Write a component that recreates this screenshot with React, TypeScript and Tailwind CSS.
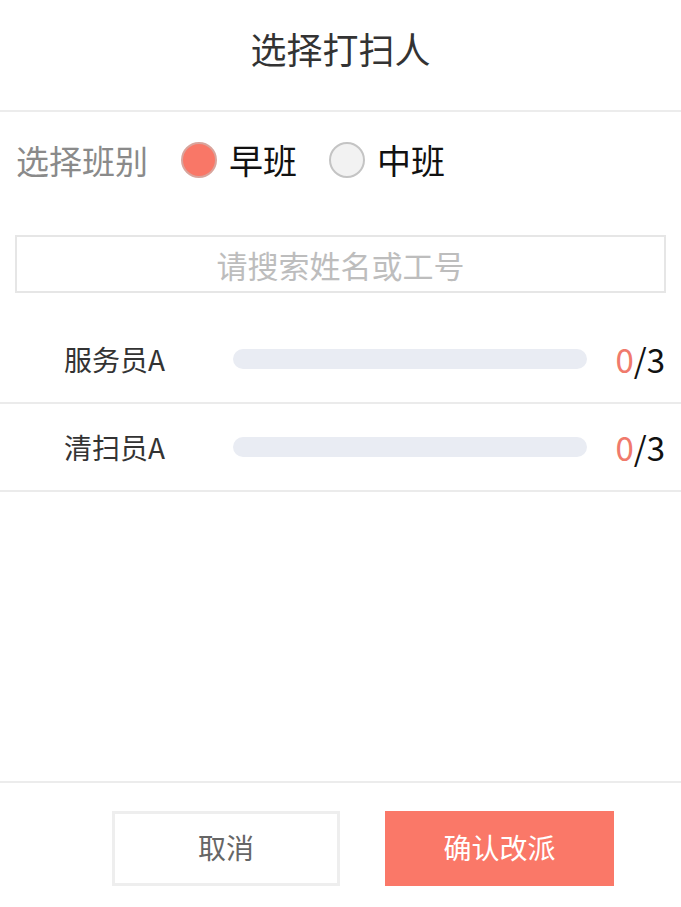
import React from 'react'

const FONT = { fontFamily: '"Noto Sans CJK SC", "Noto Sans", sans-serif' }

type Worker = {
  name: string
  done: number
  total: number
}

const workers: Worker[] = [
  { name: '服务员A', done: 0, total: 3 },
  { name: '清扫员A', done: 0, total: 3 },
]

const Radio = ({ checked, label }: { checked: boolean; label: string }) => (
  <div className="flex items-center gap-[12px]">
    {checked ? (
      <span className="block size-[36px] rounded-full border-2 border-[#d9a49c] bg-[#f97767]" />
    ) : (
      <span className="block size-[36px] rounded-full border-2 border-[#c4c4c4] bg-[#f2f2f2]" />
    )}
    <span className="text-[34px] leading-none text-[#111]">{label}</span>
  </div>
)

export default function App() {
  return (
    <div className="flex h-[907px] w-[681px] flex-col bg-white" style={FONT}>
      <div className="flex h-[112px] shrink-0 items-center justify-center border-b-2 border-[#ececec] pb-[14px]">
        <h1 className="text-[36px] font-normal leading-none text-[#333]">选择打扫人</h1>
      </div>

      <div className="flex h-[96px] shrink-0 items-center pl-[16px]">
        <span className="mr-[33px] text-[33px] leading-none text-[#8a8a8a]">选择班别</span>
        <Radio checked label="早班" />
        <div className="w-[32px]" />
        <Radio checked={false} label="中班" />
      </div>

      <div className="mx-[15px] mt-[27px] flex h-[58px] shrink-0 items-center justify-center border-2 border-[#e6e6e6]">
        <span className="text-[31px] leading-none text-[#bdbdbd]">请搜索姓名或工号</span>
      </div>

      <div className="mt-[23px]">
        {workers.map((w) => (
          <div
            key={w.name}
            className="flex h-[88px] items-center border-b-2 border-[#ebebeb] pl-[64px] pr-[16px]"
          >
            <span className="w-[169px] text-[28px] leading-none text-[#333]">{w.name}</span>
            <div className="h-[20px] w-[354px] rounded-full bg-[#e9ecf3]" />
            <span className="flex-1 text-right text-[33px] leading-none text-[#111]">
              <span className="text-[#f07a6c]">{w.done}</span>/{w.total}
            </span>
          </div>
        ))}
      </div>

      <div className="flex-1" />

      <div className="flex h-[126px] shrink-0 gap-[45px] border-t-2 border-[#ececec] pl-[112px] pt-[28px]">
        <button className="flex h-[75px] w-[228px] items-center justify-center border-[3px] border-[#eeeeee] bg-white pb-[4px] text-[28px] text-[#666]">
          取消
        </button>
        <button className="flex h-[75px] w-[229px] items-center justify-center bg-[#fa7868] pb-[4px] text-[28px] text-white">
          确认改派
        </button>
      </div>
    </div>
  )
}
